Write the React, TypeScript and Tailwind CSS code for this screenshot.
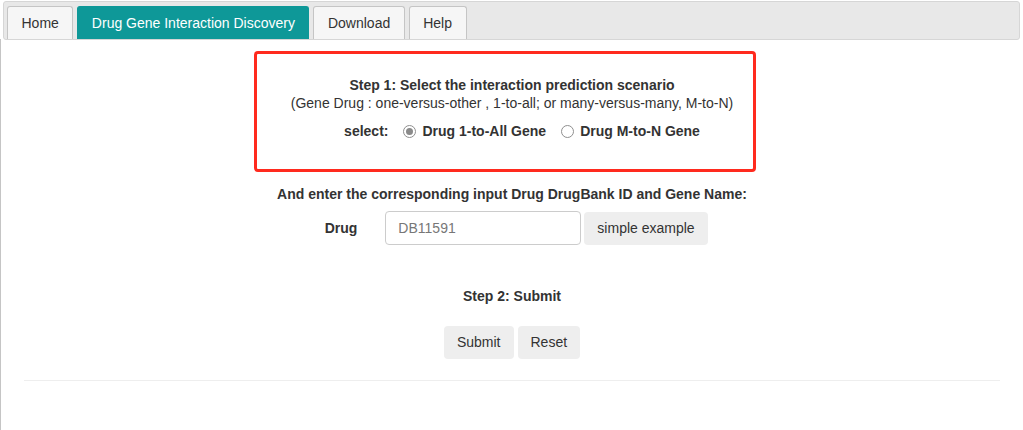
import React, { useState } from 'react';

const tabs = ['Home', 'Drug Gene Interaction Discovery', 'Download', 'Help'];

const Radio = ({ checked, label, onClick }: { checked: boolean; label: string; onClick: () => void }) => (
  <label className="flex items-center cursor-pointer" onClick={onClick}>
    <span className="w-[13px] h-[13px] rounded-full border border-[#8f8f8f] bg-white flex items-center justify-center">
      {checked && <span className="w-[7px] h-[7px] rounded-full bg-[#8a8a8a]" />}
    </span>
    <span className="ml-[6px] font-bold">{label}</span>
  </label>
);

const App = () => {
  const [mode, setMode] = useState('one');
  const [drug, setDrug] = useState('');

  return (
    <div className="w-[1023px] h-[430px] bg-white text-[14px] text-[#333] font-['Liberation_Sans',Arial,sans-serif] overflow-hidden">
      <div className="pt-px px-[3px]">
        <div className="h-[39px] bg-[#e8e8e8] border border-[#d6d6d6] rounded-[3px] pl-[3px] pt-[4px] flex items-end gap-[4px]">
          {tabs.map((t, i) => (
            <div
              key={t}
              className={`h-[33px] px-[13.5px] flex items-center rounded-t-[3px] border border-b-0 ${
                i === 1
                  ? 'bg-[#0e9898] border-[#0e9898] text-white'
                  : 'bg-[#f6f6f6] border-[#c5c5c5] text-[#333]'
              }`}
            >
              {t}
            </div>
          ))}
        </div>
      </div>

      <div className="border-l border-[#c5c5c5] -mt-px h-full">
        <div className="flex flex-col items-center">
          <div className="mt-[12px] mr-[14px] w-[502px] h-[121px] border-[3px] border-[#ff2a1e] rounded-[4px] flex flex-col items-center pt-[22px] pl-[14px] leading-[18px]">
            <div className="font-bold">Step 1: Select the interaction prediction scenario</div>
            <div>(Gene Drug : one-versus-other , 1-to-all; or many-versus-many, M-to-N)</div>
            <div className="mt-[10px] flex items-center gap-[15px] ml-[20px]">
              <span className="font-bold">select:</span>
              <Radio checked={mode === 'one'} label="Drug 1-to-All Gene" onClick={() => setMode('one')} />
              <Radio checked={mode === 'many'} label="Drug M-to-N Gene" onClick={() => setMode('many')} />
            </div>
          </div>

          <div className="mt-[12px] font-bold">And enter the corresponding input Drug DrugBank ID and Gene Name:</div>

          <div className="mt-[6px] flex items-center mr-[18px]">
            <span className="font-bold w-[59px] text-right mr-[28px]">Drug</span>
            <input
              value={drug}
              onChange={(e) => setDrug(e.target.value)}
              placeholder="DB11591"
              className="w-[196px] h-[34px] border border-[#ccc] rounded-[4px] px-[12px] text-[#555] placeholder:text-[#777] outline-none"
            />
            <button className="ml-[3px] h-[33px] px-[13px] bg-[#eee] rounded-[4px] text-[#333]">simple example</button>
          </div>

          <div className="mt-[41px] font-bold">Step 2: Submit</div>

          <div className="mt-[19px] flex gap-[4px]">
            <button className="h-[33px] px-[13px] bg-[#eee] rounded-[4px] text-[#333]">Submit</button>
            <button className="h-[33px] px-[13px] bg-[#eee] rounded-[4px] text-[#333]">Reset</button>
          </div>
        </div>

        <div className="mt-[21px] mx-[23px] border-t border-[#eee]" />
      </div>
    </div>
  );
};

export default App;
